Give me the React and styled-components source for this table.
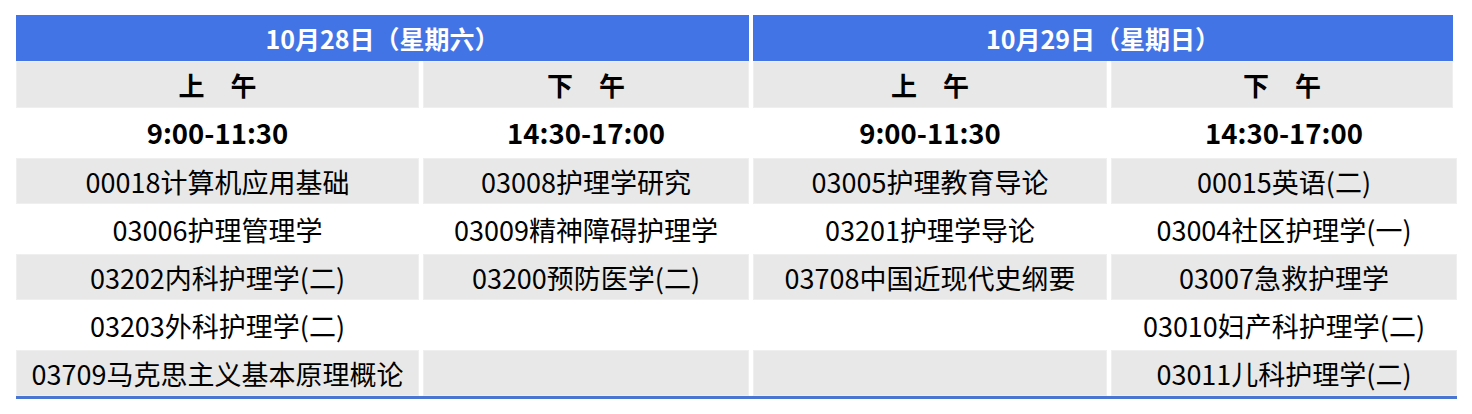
import React from 'react'
import styled, { createGlobalStyle } from 'styled-components'

const GlobalStyle = createGlobalStyle`
  body {
    margin: 0;
    background: #fff;
    font-family: "Noto Sans CJK SC", "Noto Sans", sans-serif;
  }
`

const days = [
  { title: '10月28日（星期六）' },
  { title: '10月29日（星期日）' },
]

const halves = ['上　午', '下　午', '上　午', '下　午']
const times = ['9:00-11:30', '14:30-17:00', '9:00-11:30', '14:30-17:00']

const subjects = [
  ['00018计算机应用基础', '03008护理学研究', '03005护理教育导论', '00015英语(二)'],
  ['03006护理管理学', '03009精神障碍护理学', '03201护理学导论', '03004社区护理学(一)'],
  ['03202内科护理学(二)', '03200预防医学(二)', '03708中国近现代史纲要', '03007急救护理学'],
  ['03203外科护理学(二)', '', '', '03010妇产科护理学(二)'],
  ['03709马克思主义基本原理概论', '', '', '03011儿科护理学(二)'],
]

function App() {
  return (
    <>
      <GlobalStyle />
      <Wrap>
        <Head>
          {days.map((d) => (
            <DayCell key={d.title}>{d.title}</DayCell>
          ))}
          {halves.map((h, i) => (
            <HalfCell key={i}>{h}</HalfCell>
          ))}
        </Head>
        <Body>
          {times.map((t, i) => (
            <TimeCell key={i}>{t}</TimeCell>
          ))}
          {subjects.map((row, r) =>
            row.map((s, c) => (
              <Cell key={r + '-' + c} $shaded={r % 2 === 0}>
                {s}
              </Cell>
            ))
          )}
        </Body>
      </Wrap>
    </>
  )
}

const Wrap = styled.div`
  margin: 15px 0 0 16px;
  width: 1441px;
  border-bottom: 3px solid #4a76d2;
`

const Head = styled.div`
  display: grid;
  grid-template-columns: 403px 326px 354px 1fr;
  column-gap: 4px;
  width: 1437px;
`

const DayCell = styled.div`
  grid-column: span 2;
  height: 46px;
  background: #4374e6;
  color: #fff;
  font-size: 25px;
  font-weight: 700;
  display: flex;
  align-items: center;
  justify-content: center;
`

const HalfCell = styled.div`
  height: 47px;
  background: #e8e8e8;
  box-shadow: inset 0 0 0 1px #efefef;
  color: #000;
  font-size: 26px;
  font-weight: 700;
  display: flex;
  align-items: center;
  justify-content: center;
`

const Body = styled.div`
  display: grid;
  grid-template-columns: 403px 326px 354px 1fr;
  grid-auto-rows: 46px;
  grid-template-rows: 48px;
  column-gap: 4px;
  row-gap: 2px;
`

const TimeCell = styled.div`
  color: #000;
  font-size: 27.5px;
  font-weight: 700;
  display: flex;
  align-items: center;
  justify-content: center;
`

const Cell = styled.div`
  background: ${(p) => (p.$shaded ? '#e8e8e8' : '#fff')};
  box-shadow: ${(p) => (p.$shaded ? 'inset 0 0 0 1px #efefef' : 'none')};
  color: #000;
  font-size: 27px;
  white-space: nowrap;
  display: flex;
  align-items: center;
  justify-content: center;
`

export default App
